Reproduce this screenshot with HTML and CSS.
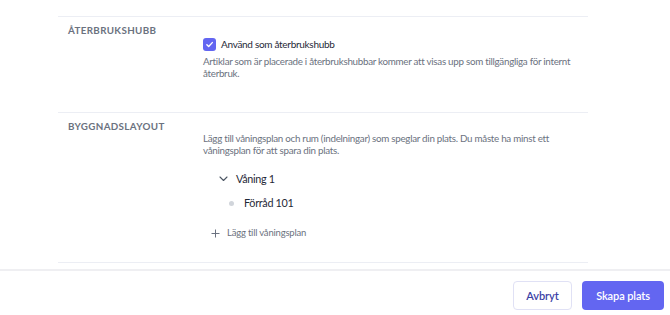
FILE: index.html
```html
<!DOCTYPE html>
<html lang="sv">
<head>
    <meta charset="UTF-8">
    <title>Skapa plats</title>
    <link rel="stylesheet" href="styles.css">
</head>
<body>
    <div class="page">
        <div class="form">
            <section class="section section-hub">
                <h3 class="section-title">Återbrukshubb</h3>
                <div class="section-body">
                    <label class="check">
                        <span class="check-box">
                            <svg width="9" height="9" viewBox="0 0 12 12"><path d="M2.5 6.3l2.4 2.4 4.8-5.2" fill="none" stroke="#fff" stroke-width="1.9" stroke-linecap="round" stroke-linejoin="round"/></svg>
                        </span>
                        Använd som återbrukshubb
                    </label>
                    <p class="hint">Artiklar som är placerade i återbrukshubbar kommer att visas upp som tillgängliga för internt återbruk.</p>
                </div>
            </section>
            <section class="section section-layout">
                <h3 class="section-title">Byggnadslayout</h3>
                <div class="section-body">
                    <p class="hint">Lägg till våningsplan och rum (indelningar) som speglar din plats. Du måste ha minst ett våningsplan för att spara din plats.</p>
                    <ul class="tree">
                        <li class="floor">
                            <svg class="chevron" width="9" height="6" viewBox="0 0 9 6"><path d="M1 1l3.5 3.5L8 1" fill="none" stroke="#4b5563" stroke-width="1.1" stroke-linecap="round" stroke-linejoin="round"/></svg>
                            Våning 1
                        </li>
                        <li class="room"><span class="dot"></span>Förråd 101</li>
                    </ul>
                    <button class="add-floor" type="button">
                        <svg width="9" height="9" viewBox="0 0 9 9"><path d="M4.5 0.5v8M0.5 4.5h8" stroke="#6b7280" stroke-width="1"/></svg>
                        Lägg till våningsplan
                    </button>
                </div>
            </section>
        </div>
        <footer class="footer">
            <button class="btn btn-secondary" type="button">Avbryt</button>
            <button class="btn btn-primary" type="button">Skapa plats</button>
        </footer>
    </div>
</body>
</html>
```

FILE: styles.css
```css
html {
    font-family: "Lato", "Noto Sans", sans-serif;
    color: #111827;
}

body {
    margin: 0;
    background: #ffffff;
}

.page {
    width: 670px;
    height: 315px;
    overflow: hidden;
}

.form {
    margin: 16px 82px 0 58px;
    border-top: 1px solid #eceef4;
}

.section {
    display: grid;
    grid-template-columns: 145px 1fr;
    border-bottom: 1px solid #eceef4;
}

.section-hub {
    height: 95px;
}

.section-layout {
    height: 149px;
}

.section-title {
    margin: 0;
    padding: 6px 0 0 10px;
    font-size: 9.8px;
    font-weight: 700;
    letter-spacing: 0.35px;
    line-height: 14px;
    color: #6b7280;
    text-transform: uppercase;
}

.section-body {
    padding-top: 20px;
}

.section-layout .section-body {
    padding-top: 19px;
}

.check {
    display: flex;
    align-items: center;
    gap: 5px;
    font-size: 10px;
    letter-spacing: -0.3px;
    line-height: 14px;
    color: #1f2937;
}

.check-box {
    display: flex;
    align-items: center;
    justify-content: center;
    width: 13px;
    height: 13px;
    border-radius: 3px;
    background: #6366f1;
}

.hint {
    margin: 4px 0 0;
    font-size: 9.8px;
    letter-spacing: -0.28px;
    line-height: 12px;
    color: #6b7280;
}

.section-layout .hint {
    margin-top: 0;
}

.tree {
    list-style: none;
    margin: 15px 0 0;
    padding: 0;
}

.floor {
    display: flex;
    align-items: center;
    gap: 8px;
    padding-left: 16px;
    font-size: 10.8px;
    letter-spacing: -0.3px;
    line-height: 16px;
    color: #1f2937;
}

.room {
    display: flex;
    align-items: center;
    margin-top: 8px;
    padding-left: 26px;
    font-size: 10.8px;
    letter-spacing: -0.3px;
    line-height: 16px;
    color: #1f2937;
}

.dot {
    width: 5px;
    height: 5px;
    margin-right: 10px;
    border-radius: 50%;
    background: #d1d5db;
}

.add-floor {
    display: flex;
    align-items: center;
    gap: 7px;
    margin: 15px 0 0 8px;
    padding: 0;
    border: 0;
    background: none;
    font-family: inherit;
    font-size: 9.5px;
    letter-spacing: -0.2px;
    line-height: 14px;
    color: #6b7280;
}

.footer {
    display: flex;
    justify-content: flex-end;
    gap: 10px;
    margin-top: 6px;
    padding: 10px 6px 0 0;
    border-top: 2px solid #efeff2;
}

.btn {
    height: 29px;
    border-radius: 4px;
    font-family: inherit;
    font-size: 11px;
    font-weight: 600;
    letter-spacing: -0.1px;
}

.btn-secondary {
    width: 59px;
    border: 1px solid #e0e1f5;
    background: #ffffff;
    color: #3b3fa5;
}

.btn-primary {
    width: 82px;
    border: 0;
    background: #6366f1;
    color: #ffffff;
}
```
